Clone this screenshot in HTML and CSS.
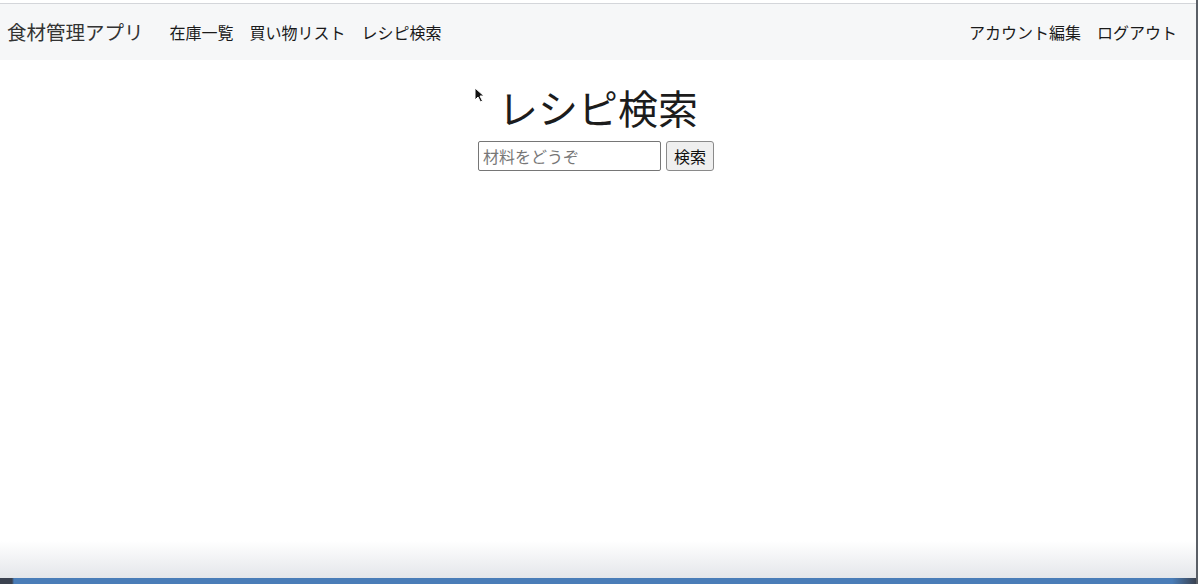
FILE: index.html
```html
<!DOCTYPE html>
<html lang="ja">
<head>
    <meta charset="UTF-8">
    <meta name="viewport" content="width=device-width, initial-scale=1.0">
    <title>レシピ検索</title>
    <link rel="stylesheet" href="styles.css">
</head>
<body>
    <div class="page">
        <nav class="navbar">
            <a class="brand" href="#">食材管理アプリ</a>
            <ul class="nav">
                <li><a href="#">在庫一覧</a></li>
                <li><a href="#">買い物リスト</a></li>
                <li><a href="#">レシピ検索</a></li>
            </ul>
            <ul class="nav nav-right">
                <li><a href="#">アカウント編集</a></li>
                <li><a href="#">ログアウト</a></li>
            </ul>
        </nav>

        <main class="content">
            <h1>レシピ検索</h1>
            <form class="search">
                <input type="text" placeholder="材料をどうぞ">
                <button type="button">検索</button>
            </form>
        </main>

        <div class="fade"></div>
        <div class="taskbar"></div>

        <svg class="cursor" width="11" height="16" viewBox="0 0 11 16">
            <path d="M1 1 L1 13 L4 10 L6.5 15 L8.5 14 L6 9 L10 9 Z" fill="#111" stroke="#fff" stroke-width="1"/>
        </svg>
    </div>
</body>
</html>
```

FILE: styles.css
```css
body {
    margin: 0;
    font-family: "Noto Sans CJK JP", "Noto Sans", sans-serif;
    color: #212529;
    background: #fff;
}
.page {
    position: relative;
    height: 584px;
    display: flex;
    flex-direction: column;
    padding-top: 3px;
    box-sizing: border-box;
    border-right: 2px solid #5a5f66;
}
.navbar {
    display: flex;
    align-items: center;
    height: 56px;
    padding: 0 11px 0 7px;
    background-color: #f6f7f8;
    border-top: 1px solid #d4d6da;
}
.navbar a {
    text-decoration: none;
}
.brand {
    font-size: 19.5px;
    color: #333;
    margin-right: 18px;
    line-height: 30px;
}
.nav {
    display: flex;
    list-style: none;
    margin: 0;
    padding: 0;
}
.nav a {
    display: block;
    padding: 8px;
    font-size: 16px;
    color: #1a1a1a;
}
.nav-right {
    margin-left: auto;
}
.content {
    flex: 1;
    text-align: center;
}
.content h1 {
    font-size: 40px;
    font-weight: 400;
    line-height: 48px;
    margin: 23px 0 10px;
    color: #1c1c1c;
}
.search {
    display: flex;
    justify-content: center;
    gap: 5px;
    padding-right: 4px;
}
.search input {
    width: 183px;
    height: 30px;
    box-sizing: border-box;
    padding: 2px 4px;
    border: 1px solid #767676;
    border-radius: 2px;
    font-family: inherit;
    font-size: 16px;
}
.search input::placeholder {
    color: #777;
}
.search button {
    width: 48px;
    height: 30px;
    box-sizing: border-box;
    padding: 0;
    border: 1px solid #8a8a8a;
    border-radius: 3px;
    background-color: #efefef;
    font-family: inherit;
    font-size: 16px;
    color: #111;
}
.fade {
    height: 37px;
    background: linear-gradient(#fff, #e4e6ea);
}
.taskbar {
    height: 6px;
    background: linear-gradient(90deg, #3b4250 0, #3b4250 12px, #4a7db8 14px, #4a7db8 98%, #3b4250 100%);
}
.cursor {
    position: absolute;
    left: 474px;
    top: 87px;
}
```
